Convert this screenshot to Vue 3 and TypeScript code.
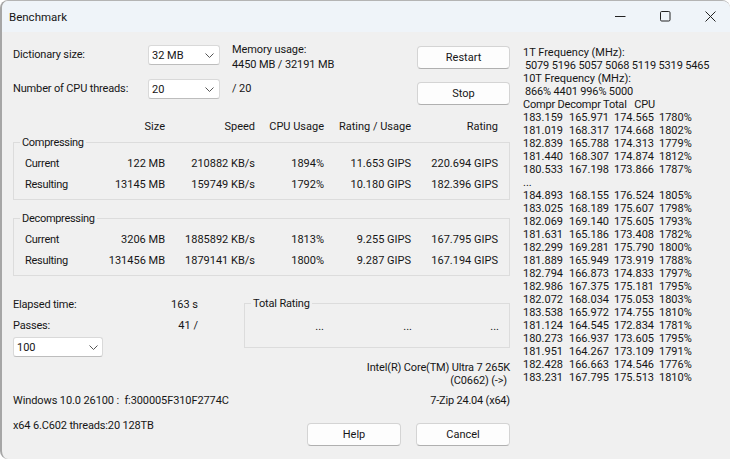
<script setup lang="ts">
const stats = [
  {
    title: 'Compressing',
    rows: [
      ['Current', '122 MB', '210882 KB/s', '1894%', '11.653 GIPS', '220.694 GIPS'],
      ['Resulting', '13145 MB', '159749 KB/s', '1792%', '10.180 GIPS', '182.396 GIPS'],
    ],
  },
  {
    title: 'Decompressing',
    rows: [
      ['Current', '3206 MB', '1885892 KB/s', '1813%', '9.255 GIPS', '167.795 GIPS'],
      ['Resulting', '131456 MB', '1879141 KB/s', '1800%', '9.287 GIPS', '167.194 GIPS'],
    ],
  },
];

const head = ['', 'Size', 'Speed', 'CPU Usage', 'Rating / Usage', 'Rating'];

const firstRuns = [
  ['183.159', '165.971', '174.565', '1780%'],
  ['181.019', '168.317', '174.668', '1802%'],
  ['182.839', '165.788', '174.313', '1779%'],
  ['181.440', '168.307', '174.874', '1812%'],
  ['180.533', '167.198', '173.866', '1787%'],
];

const lastRuns = [
  ['184.893', '168.155', '176.524', '1805%'],
  ['183.025', '168.189', '175.607', '1798%'],
  ['182.069', '169.140', '175.605', '1793%'],
  ['181.631', '165.186', '173.408', '1782%'],
  ['182.299', '169.281', '175.790', '1800%'],
  ['181.889', '165.949', '173.919', '1788%'],
  ['182.794', '166.873', '174.833', '1797%'],
  ['182.986', '167.375', '175.181', '1795%'],
  ['182.072', '168.034', '175.053', '1803%'],
  ['183.538', '165.972', '174.755', '1810%'],
  ['181.124', '164.545', '172.834', '1781%'],
  ['180.273', '166.937', '173.605', '1795%'],
  ['181.951', '164.267', '173.109', '1791%'],
  ['182.428', '166.663', '174.546', '1776%'],
  ['183.231', '167.795', '175.513', '1810%'],
];
</script>

<template>
  <div class="window">
    <header class="titlebar">
      <span class="title">Benchmark</span>
      <div class="controls">
        <svg width="11" height="11" viewBox="0 0 11 11"><path d="M0 5.5h10.5" /></svg>
        <svg width="11" height="11" viewBox="0 0 11 11"><rect x="0.5" y="0.5" width="9.5" height="9.5" rx="1.2" /></svg>
        <svg width="11" height="11" viewBox="0 0 11 11"><path d="M0.5 0.5l10 10M10.5 0.5l-10 10" /></svg>
      </div>
    </header>

    <main class="body">
      <section class="left">
        <div class="settings">
          <div class="settings-row first">
            <span class="setting-label">Dictionary size:</span>
            <div class="select dict">
              <span>32 MB</span>
              <svg width="9" height="5" viewBox="0 0 9 5"><path d="M0.5 0.5l4 4 4-4" /></svg>
            </div>
            <div class="memory">
              <div>Memory usage:</div>
              <div>4450 MB / 32191 MB</div>
            </div>
            <button class="btn">Restart</button>
          </div>
          <div class="settings-row second">
            <span class="setting-label">Number of CPU threads:</span>
            <div class="select dict">
              <span>20</span>
              <svg width="9" height="5" viewBox="0 0 9 5"><path d="M0.5 0.5l4 4 4-4" /></svg>
            </div>
            <div class="memory">/ 20</div>
            <button class="btn">Stop</button>
          </div>
        </div>

        <div class="stat-grid stat-head">
          <span v-for="h in head" :key="h">{{ h }}</span>
        </div>

        <fieldset v-for="group in stats" :key="group.title" class="group">
          <legend>{{ group.title }}</legend>
          <div v-for="row in group.rows" :key="row[0]" class="stat-grid stat-row">
            <span v-for="(cell, i) in row" :key="i">{{ cell }}</span>
          </div>
        </fieldset>

        <div class="summary">
          <div class="passes">
            <div class="pass-line"><span class="pass-label">Elapsed time:</span><span>163 s</span></div>
            <div class="pass-line"><span class="pass-label">Passes:</span><span>41 /</span></div>
            <div class="select count">
              <span>100</span>
              <svg width="9" height="5" viewBox="0 0 9 5"><path d="M0.5 0.5l4 4 4-4" /></svg>
            </div>
          </div>
          <fieldset class="group total">
            <legend>Total Rating</legend>
            <div class="dots"><span>...</span><span>...</span><span>...</span></div>
          </fieldset>
        </div>

        <div class="cpu">
          <div>Intel(R) Core(TM) Ultra 7 265K</div>
          <div class="cpu-id">(C0662) (-&gt;)</div>
        </div>

        <div class="version">
          <span class="os">Windows 10.0 26100 :&nbsp; f:300005F310F2774C</span>
          <span class="zip">7-Zip 24.04 (x64)</span>
        </div>

        <div class="footer">
          <span class="sys">x64 6.C602 threads:20 128TB</span>
          <div class="footer-btns">
            <button class="btn">Help</button>
            <button class="btn">Cancel</button>
          </div>
        </div>
      </section>

      <aside class="log">
        <div>1T Frequency (MHz):</div>
        <div class="indent">5079 5196 5057 5068 5119 5319 5465</div>
        <div>10T Frequency (MHz):</div>
        <div class="indent">866% 4401 996% 5000</div>
        <div class="log-head">Compr Decompr Total &nbsp; CPU</div>
        <div v-for="run in firstRuns" :key="run[0]" class="run">
          <span v-for="(v, i) in run" :key="i">{{ v }}</span>
        </div>
        <div>...</div>
        <div v-for="run in lastRuns" :key="run[0]" class="run">
          <span v-for="(v, i) in run" :key="i">{{ v }}</span>
        </div>
      </aside>
    </main>
  </div>
</template>

<style>
html,
body {
  margin: 0;
  background: #fff;
}
</style>

<style scoped>
.window {
  width: 730px;
  height: 459px;
  box-sizing: border-box;
  overflow: hidden;
  background: #f0f0f0;
  border-top: 1px solid #b4b4b4;
  border-left: 2px solid #a6a6a6;
  border-radius: 8px 8px 0 8px;
  font-family: Roboto, 'Liberation Sans', sans-serif;
  font-size: 11px;
  color: #161616;
}

.titlebar {
  height: 31px;
  background: #eff4f9;
  display: flex;
  align-items: center;
  justify-content: space-between;
  padding-left: 7px;
}

.title {
  font-size: 11.5px;
}

.controls {
  display: flex;
  gap: 34px;
  padding-right: 14px;
}

.controls svg {
  fill: none;
  stroke: #222;
  stroke-width: 1;
}

.body {
  display: flex;
}

.left {
  width: 497px;
  margin-left: 11px;
  flex: none;
}

.settings {
  padding-top: 13px;
}

.settings-row {
  display: flex;
  align-items: flex-start;
}

.settings-row.second {
  margin-top: 7px;
}

.setting-label {
  width: 135px;
  flex: none;
  margin-top: 3px;
  letter-spacing: -0.15px;
}

.select {
  height: 20px;
  box-sizing: border-box;
  background: #fff;
  border: 1px solid #d9d9d9;
  border-bottom-color: #bdbdbd;
  border-radius: 3px;
  display: flex;
  align-items: center;
  justify-content: space-between;
  padding: 0 5px 0 3px;
}

.select svg {
  fill: none;
  stroke: #555;
}

.dict {
  width: 72px;
  flex: none;
}

.memory {
  width: 185px;
  margin-left: 12px;
  flex: none;
  line-height: 15px;
  letter-spacing: -0.1px;
}

.first .memory {
  margin-top: -3px;
}

.second .memory {
  margin-top: 2px;
}

.btn {
  width: 94px;
  height: 23px;
  padding: 0;
  box-sizing: border-box;
  background: #fdfdfd;
  border: 1px solid #d4d4d4;
  border-bottom-color: #b0b0b0;
  border-radius: 4px;
  font: inherit;
  color: inherit;
}

.first .btn {
  margin-top: 1px;
}

.second .btn {
  margin-top: 3px;
}

.stat-grid {
  display: grid;
  grid-template-columns: 70px 82px 90px 69px 87px 87px;
  text-align: right;
  line-height: 16px;
}

.stat-grid > :first-child {
  text-align: left;
}

.stat-head {
  margin-top: 14px;
}

.group {
  margin: 0;
  padding: 0;
  min-width: 0;
  border: 1px solid #dcdcdc;
}

.group + .group {
  margin-top: 11px;
}

.group legend {
  margin-left: 6px;
  padding: 0 2px;
  line-height: 15px;
  letter-spacing: -0.3px;
}

.stat-row {
  margin-left: -1px;
  height: 21px;
  align-items: center;
}

.stat-row > :first-child {
  padding-left: 12px;
  letter-spacing: -0.3px;
}

.stat-row:first-of-type {
  margin-top: 3px;
}

.group:not(.total) {
  height: 65px;
  box-sizing: border-box;
}

.summary {
  display: flex;
  margin-top: 18px;
}

.passes {
  width: 185px;
  flex: none;
}

.pass-line {
  display: flex;
  justify-content: space-between;
  line-height: 21px;
}

.pass-label {
  letter-spacing: -0.2px;
}

.count {
  width: 90px;
  margin-top: 1px;
  padding-right: 4px;
}

.group.total {
  margin: 2px 0 0 46px;
  width: 266px;
  height: 52px;
  box-sizing: border-box;
}

.group.total legend {
  letter-spacing: -0.15px;
}

.dots {
  display: grid;
  grid-template-columns: 79px 88px 87px;
  text-align: right;
  line-height: 16px;
  margin-top: 8px;
}

.cpu {
  text-align: right;
  line-height: 13px;
  margin-top: 4px;
  letter-spacing: -0.15px;
}

.cpu-id {
  padding-right: 3px;
}

.version {
  display: flex;
  justify-content: space-between;
  margin-top: 6px;
  line-height: 15px;
}

.os {
  letter-spacing: -0.1px;
}

.zip {
  letter-spacing: -0.2px;
}

.footer {
  display: flex;
  justify-content: space-between;
  align-items: flex-start;
  margin-top: 8px;
}

.sys {
  line-height: 20px;
  letter-spacing: -0.15px;
}

.footer-btns {
  display: flex;
  gap: 15px;
  margin-top: 7px;
}

.log {
  margin-left: 13px;
  margin-top: 14px;
  line-height: 13px;
  white-space: pre;
}

.indent {
  padding-left: 2px;
  letter-spacing: -0.15px;
}

.log-head {
  letter-spacing: -0.2px;
}

.run {
  display: grid;
  grid-template-columns: 46px 45px 45px auto;
}
</style>
